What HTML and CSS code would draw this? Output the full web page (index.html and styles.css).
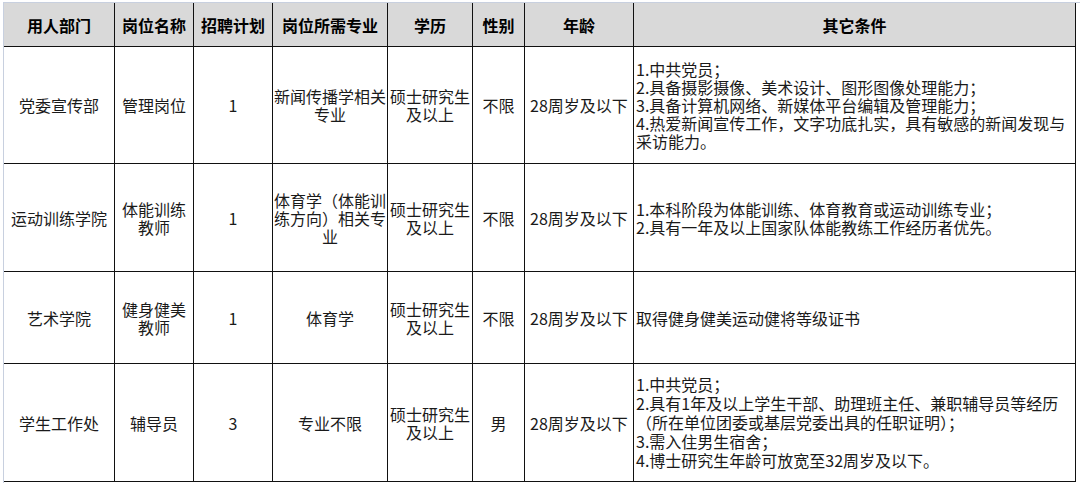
FILE: index.html
```html
<!DOCTYPE html>
<html lang="zh-CN">
<head>
<meta charset="utf-8">
<title>招聘岗位</title>
<link rel="stylesheet" href="styles.css">
</head>
<body>
<div class="sheet">
  <div class="grid" role="table">
    <div class="cell head">用人部门</div>
    <div class="cell head">岗位名称</div>
    <div class="cell head">招聘计划</div>
    <div class="cell head">岗位所需专业</div>
    <div class="cell head">学历</div>
    <div class="cell head">性别</div>
    <div class="cell head">年龄</div>
    <div class="cell head">其它条件</div>

    <div class="cell">党委宣传部</div>
    <div class="cell">管理岗位</div>
    <div class="cell">1</div>
    <div class="cell">新闻传播学相关<br>专业</div>
    <div class="cell">硕士研究生<br>及以上</div>
    <div class="cell">不限</div>
    <div class="cell">28周岁及以下</div>
    <div class="cell cond">1.中共党员；<br>2.具备摄影摄像、美术设计、图形图像处理能力；<br>3.具备计算机网络、新媒体平台编辑及管理能力；<br>4.热爱新闻宣传工作，文字功底扎实，具有敏感的新闻发现与<br>采访能力。</div>

    <div class="cell">运动训练学院</div>
    <div class="cell">体能训练<br>教师</div>
    <div class="cell">1</div>
    <div class="cell">体育学（体能训<br>练方向）相关专<br>业</div>
    <div class="cell">硕士研究生<br>及以上</div>
    <div class="cell">不限</div>
    <div class="cell">28周岁及以下</div>
    <div class="cell cond">1.本科阶段为体能训练、体育教育或运动训练专业；<br>2.具有一年及以上国家队体能教练工作经历者优先。</div>

    <div class="cell">艺术学院</div>
    <div class="cell">健身健美<br>教师</div>
    <div class="cell">1</div>
    <div class="cell">体育学</div>
    <div class="cell">硕士研究生<br>及以上</div>
    <div class="cell">不限</div>
    <div class="cell">28周岁及以下</div>
    <div class="cell cond">取得健身健美运动健将等级证书</div>

    <div class="cell">学生工作处</div>
    <div class="cell">辅导员</div>
    <div class="cell">3</div>
    <div class="cell">专业不限</div>
    <div class="cell">硕士研究生<br>及以上</div>
    <div class="cell">男</div>
    <div class="cell">28周岁及以下</div>
    <div class="cell cond loose">1.中共党员；<br>2.具有1年及以上学生干部、助理班主任、兼职辅导员等经历<br>（所在单位团委或基层党委出具的任职证明）；<br>3.需入住男生宿舍；<br>4.博士研究生年龄可放宽至32周岁及以下。</div>
  </div>
</div>
</body>
</html>
```

FILE: styles.css
```css
html, body {
  margin: 0;
  padding: 0;
  background: #ffffff;
}

body {
  font-family: "Noto Sans CJK SC", "Noto Sans", sans-serif;
  color: #1a1a1a;
}

.sheet {
  margin: 2px 0 0 3px;
  border-top: 1px solid #c8d0df;
  border-left: 1px solid #c8d0df;
  height: 481px;
  box-sizing: border-box;
}

.grid {
  display: grid;
  grid-template-columns: 111px 79px 79px 115px 85px 52px 109px 442px;
  grid-template-rows: 44px 117px 108px 92px 118px;
  width: 1072px;
}

.cell {
  box-sizing: border-box;
  border-right: 1px solid #111;
  border-bottom: 1px solid #111;
  display: flex;
  align-items: center;
  justify-content: center;
  text-align: center;
  font-size: 16px;
  line-height: 18px;
  white-space: nowrap;
  overflow: hidden;
}

.head {
  background: #d9d9d9;
  font-weight: bold;
  color: #000;
}

.cond {
  justify-content: flex-start;
  text-align: left;
  padding-left: 2px;
}

.loose {
  line-height: 19px;
}
```
